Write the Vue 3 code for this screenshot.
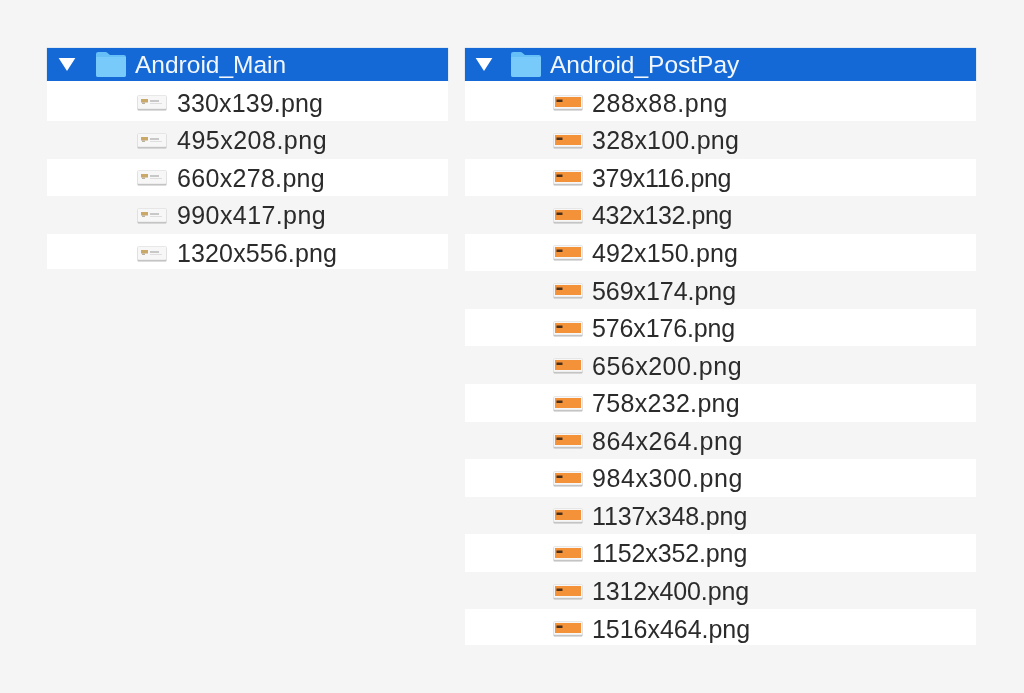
<script setup>
const size = 25
const digit = size * 0.556
const fixed = size * (0.5 + 0.278 + 0.556 * 3)

const makeFile = ([name, width]) => {
  const digits = name.replace(/\D/g, '').length
  const natural = digit * digits + fixed
  return { name, spacing: (width - natural) / name.length }
}

const panels = [
  {
    name: 'Android_Main',
    cls: 'left',
    files: [['330x139.png', 146], ['495x208.png', 150], ['660x278.png', 148], ['990x417.png', 149], ['1320x556.png', 160]].map(makeFile),
  },
  {
    name: 'Android_PostPay',
    cls: 'right',
    files: [
      ['288x88.png', 136], ['328x100.png', 147], ['379x116.png', 141], ['432x132.png', 140], ['492x150.png', 146],
      ['569x174.png', 144], ['576x176.png', 143], ['656x200.png', 150], ['758x232.png', 148], ['864x264.png', 151],
      ['984x300.png', 151], ['1137x348.png', 157], ['1152x352.png', 157], ['1312x400.png', 157], ['1516x464.png', 158],
    ].map(makeFile),
  },
]
</script>

<template>
  <div class="page">
    <section v-for="p in panels" :key="p.name" class="panel" :class="p.cls">
      <header class="head">
        <svg class="tri" viewBox="0 0 18 14"><path d="M0 0H18L9 14Z" fill="#fff"/></svg>
        <svg class="folder" viewBox="1 0 28 25" preserveAspectRatio="none">
          <path d="M1 2a2 2 0 0 1 2-2h7a2 2 0 0 1 1.5.7L14 3h13a2 2 0 0 1 2 2v18a2 2 0 0 1-2 2H3a2 2 0 0 1-2-2Z" fill="#66bff6"/>
          <path d="M1 5h28v18a2 2 0 0 1-2 2H3a2 2 0 0 1-2-2Z" fill="#78cafa"/>
        </svg>
        <span class="title">{{ p.name }}</span>
      </header>
      <div class="list">
        <div v-for="f in p.files" :key="f.name" class="row">
          <svg class="thumb" viewBox="0 0 30 18">
            <rect x="0.5" y="2.5" width="29" height="14" rx="1" fill="#b9b9b9"/>
            <rect x="0.5" y="1.5" width="29" height="13.5" rx="1" fill="#f7f7f7" stroke="#dcdcdc" stroke-width="0.6"/>
            <template v-if="p.cls === 'left'">
              <rect x="4" y="5" width="7" height="3.5" fill="#c9a868"/>
              <rect x="5" y="8.5" width="3" height="1.5" fill="#b8b0a0"/>
              <rect x="13" y="6" width="9" height="2" fill="#c8c8c8"/>
              <rect x="13" y="9" width="12" height="1" fill="#dedede"/>
            </template>
            <template v-else>
              <rect x="2" y="3" width="26" height="10" fill="#f4923a"/>
              <rect x="3.5" y="5.5" width="6" height="2.5" fill="#4a3018"/>
            </template>
          </svg>
          <span class="fname" :style="{ letterSpacing: f.spacing + 'px' }">{{ f.name }}</span>
        </div>
      </div>
    </section>
  </div>
</template>

<style scoped>
.page {
  width: 1024px;
  height: 693px;
  background: #f5f5f5;
  display: flex;
  gap: 17px;
  padding: 48px 0 0 47px;
  box-sizing: border-box;
  font-family: "Liberation Sans", Arial, sans-serif;
}
.panel { display: flex; flex-direction: column; }
.left { width: 401px; }
.right { width: 511px; }
.head {
  height: 33px;
  background: #1569d6;
  box-shadow: 0 0 1px rgba(21, 105, 214, 0.5);
  display: flex;
  align-items: center;
  flex: none;
}
.tri { width: 18px; height: 13px; margin-left: 11px; flex: none; }
.folder { width: 30px; height: 25px; margin-left: 20px; flex: none; }
.right .tri { margin-left: 10px; }
.right .folder { margin-left: 18px; }
.title { font-size: 24.5px; margin-left: 9px; color: #f2f7fd; filter: blur(0.3px); }
.right .title { margin-left: 9px; }
.list { display: flex; flex-direction: column; }
.row {
  height: 37.57px;
  padding-top: 2px;
  box-sizing: border-box;
  display: flex;
  align-items: center;
  color: #2b2b2b;
  flex: none;
}
.row:nth-child(odd) { background: #fff; }
.row:first-child { height: 40px; padding-top: 4px; }
.row:last-child { height: 35.5px; padding-top: 4.5px; }
.thumb { width: 30px; height: 18px; margin-left: 90px; flex: none; filter: blur(0.5px); }
.right .thumb { margin-left: 88px; }
.fname { font-size: 25px; margin-left: 10px; filter: blur(0.3px); }
.right .fname { margin-left: 9px; }
</style>
